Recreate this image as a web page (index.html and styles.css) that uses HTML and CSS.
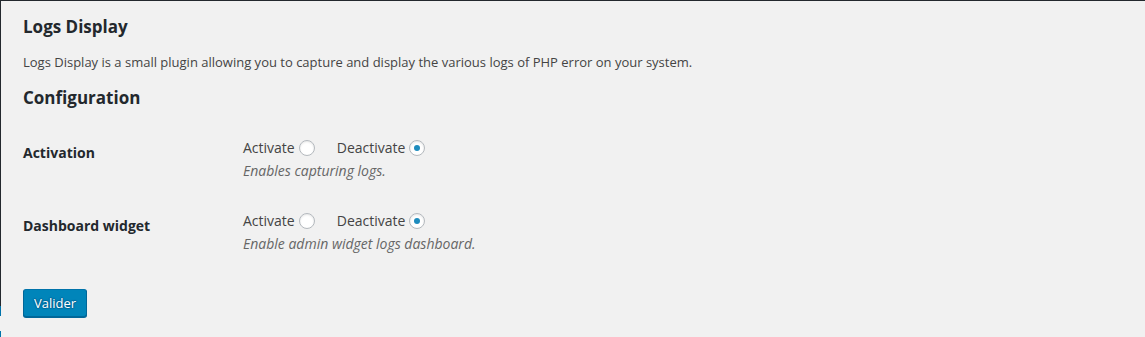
FILE: index.html
```html
<!DOCTYPE html>
<html lang="en">
<head>
<meta charset="utf-8">
<title>Logs Display</title>
<link rel="stylesheet" href="styles.css">
</head>
<body>
<div class="page">
  <div class="edge">
    <span class="edge-dark"></span>
    <span class="edge-blue"></span>
    <span class="edge-gap"></span>
    <span class="edge-blue edge-fill"></span>
  </div>
  <main class="wrap">
    <h2 class="title">Logs Display</h2>
    <p class="intro">Logs Display is a small plugin allowing you to capture and display the various logs of PHP error on your system.</p>
    <h2 class="section">Configuration</h2>
    <form class="settings">
      <div class="row">
        <div class="row-label">Activation</div>
        <div class="row-field">
          <div class="choices">
            <label class="choice">Activate <span class="radio"></span></label>
            <label class="choice choice-second">Deactivate <span class="radio checked"></span></label>
          </div>
          <p class="description">Enables capturing logs.</p>
        </div>
      </div>
      <div class="row">
        <div class="row-label">Dashboard widget</div>
        <div class="row-field">
          <div class="choices">
            <label class="choice">Activate <span class="radio"></span></label>
            <label class="choice choice-second">Deactivate <span class="radio checked"></span></label>
          </div>
          <p class="description">Enable admin widget logs dashboard.</p>
        </div>
      </div>
      <div class="submit">
        <button type="button" class="button-primary">Valider</button>
      </div>
    </form>
  </main>
</div>
</body>
</html>
```
FILE: styles.css
```css
html, body {
  margin: 0;
  padding: 0;
  background: #f1f1f1;
  overflow: hidden;
}

body {
  font-family: "Open Sans", "Liberation Sans", sans-serif;
  font-size: 13px;
  color: #444;
}

.page {
  display: flex;
  height: 337px;
}

.edge {
  width: 1px;
  display: flex;
  flex-direction: column;
}

.edge-dark {
  height: 306px;
  background: #23282d;
}

.edge-blue {
  height: 10px;
  background: #0073aa;
}

.edge-gap {
  height: 15px;
  background: #f1f1f1;
}

.edge-fill {
  flex: 1;
}

.wrap {
  flex: 1;
  border-top: 1px solid #23282d;
  padding: 0 20px 0 22px;
}

.title,
.section {
  font-size: 17px;
  font-weight: 700;
  line-height: 22px;
  color: #23282d;
  margin: 0;
}

.title {
  margin-top: 15px;
}

.intro {
  margin: 14px 0 0;
  line-height: 20px;
}

.section {
  margin-top: 15px;
}

.settings {
  margin-top: 15px;
}

.row {
  display: flex;
  align-items: flex-start;
}

.row-label {
  width: 200px;
  padding: 20px 10px 20px 0;
  font-size: 14px;
  font-weight: 700;
  line-height: 18.2px;
  color: #23282d;
}

.row-field {
  padding: 15px 10px 17px;
  font-size: 14px;
}

.choices {
  display: flex;
  align-items: center;
  height: 18px;
  line-height: 18px;
}

.choice {
  display: flex;
  align-items: center;
  gap: 4px;
}

.choice-second {
  margin-left: 22px;
}

.radio {
  box-sizing: border-box;
  width: 16px;
  height: 16px;
  border: 1px solid #b4b9be;
  border-radius: 50%;
  background: #fff;
  box-shadow: inset 0 1px 2px rgba(0, 0, 0, 0.1);
  display: flex;
  align-items: center;
  justify-content: center;
}

.radio.checked::before {
  content: "";
  width: 6px;
  height: 6px;
  border-radius: 50%;
  background: #1e8cbe;
}

.description {
  margin: 5px 0 0;
  line-height: 18px;
  font-style: italic;
  color: #666;
}

.submit {
  margin-top: 19px;
}

.button-primary {
  font-family: "Open Sans", "Liberation Sans", sans-serif;
  font-size: 13px;
  line-height: 26px;
  height: 28px;
  padding: 0 10px 1px;
  border: 1px solid;
  border-color: #0073aa #006799 #006799;
  border-radius: 3px;
  background: #0085ba;
  color: #fff;
  box-shadow: 0 1px 0 #006799;
  text-shadow: 0 -1px 1px #006799, 1px 0 1px #006799, 0 1px 1px #006799, -1px 0 1px #006799;
  cursor: pointer;
}
```
